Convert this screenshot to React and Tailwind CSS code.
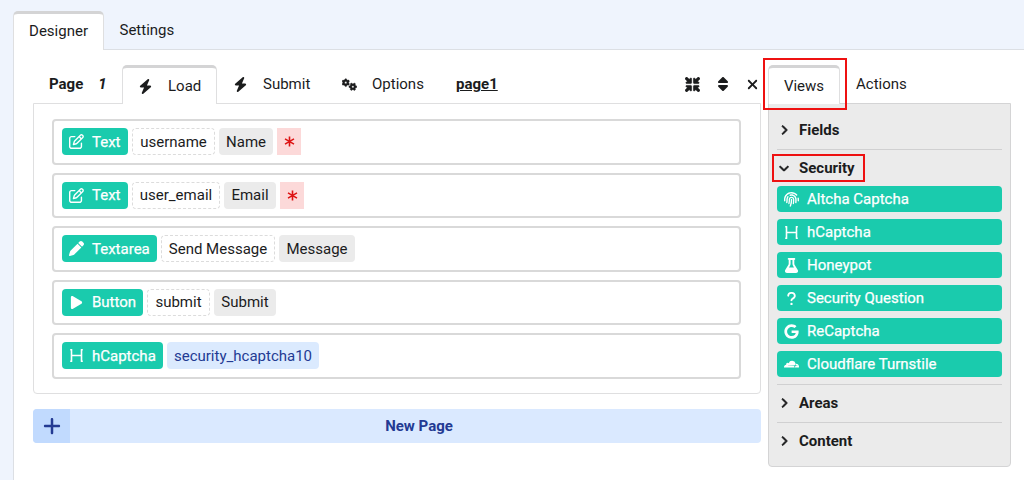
import {
  FaBolt,
  FaChevronDown,
  FaChevronRight,
  FaCloudflare,
  FaFingerprint,
  FaFlask,
  FaGears,
  FaGoogle,
  FaMinimize,
  FaPen,
  FaPlay,
  FaPlus,
  FaQuestion,
  FaRegPenToSquare,
  FaSort,
  FaXmark,
} from 'react-icons/fa6';

const HIcon = ({ size = 14, className = '' }) => (
  <svg width={size} height={size} viewBox="0 0 15 15" fill="none" stroke="currentColor" strokeWidth="1.8" className={className}>
    <path d="M2.5 1.5v12M12.5 1.5v12M2.5 7.5h10M1.2 1.8h2M11.8 1.8h2M1.2 13.2h2M11.8 13.2h2" strokeWidth="1.6" />
  </svg>
);

const RequiredIcon = () => (
  <svg width="11" height="11" viewBox="0 0 11 11" fill="none" stroke="currentColor" strokeWidth="1.6">
    <path d="M5.5 0.5v10M1 2.9l9 5.2M10 2.9l-9 5.2" />
  </svg>
);

const ROWS = [
  { type: 'Text', icon: FaRegPenToSquare, name: 'username', label: 'Name', required: true, width: 'w-[66px]', nameWidth: 'w-[83px]', labelWidth: 'w-[54px]' },
  { type: 'Text', icon: FaRegPenToSquare, name: 'user_email', label: 'Email', required: true, width: 'w-[66px]', nameWidth: 'w-[88px]', labelWidth: 'w-[52px]' },
  { type: 'Textarea', icon: FaPen, name: 'Send Message', label: 'Message', width: 'w-[95px]', nameWidth: 'w-[114px]', labelWidth: 'w-[76px]' },
  { type: 'Button', icon: FaPlay, name: 'submit', label: 'Submit', width: 'w-[81px]', nameWidth: 'w-[63px]', labelWidth: 'w-[62px]' },
  { type: 'hCaptcha', icon: HIcon, id: 'security_hcaptcha10', width: 'w-[101px]' },
];

const SECURITY_VIEWS = [
  { label: 'Altcha Captcha', icon: FaFingerprint },
  { label: 'hCaptcha', icon: HIcon },
  { label: 'Honeypot', icon: FaFlask },
  { label: 'Security Question', icon: FaQuestion },
  { label: 'ReCaptcha', icon: FaGoogle },
  { label: 'Cloudflare Turnstile', icon: FaCloudflare },
];

const CHIP = 'flex h-[27px] shrink-0 items-center justify-center rounded-[4px] whitespace-nowrap';

const FieldRow = ({ row }) => {
  const Icon = row.icon;
  return (
    <div className="flex h-[45.5px] items-center gap-1 rounded-[4px] border-2 border-[#d9d9d9] pl-[8px]">
      <div className={`${CHIP} ${row.width} justify-start! bg-[#1acbad] pl-[7px] text-white [-webkit-text-stroke:0.25px_white]`}>
        <Icon size={15} className="mr-2 shrink-0" />
        {row.type}
      </div>
      {row.name && (
        <div className={`${CHIP} ${row.nameWidth} border border-dashed border-[#dcdcdc]`}>{row.name}</div>
      )}
      {row.label && <div className={`${CHIP} ${row.labelWidth} bg-[#ebebeb]`}>{row.label}</div>}
      {row.required && (
        <div className="flex h-[27px] w-6 items-center justify-center bg-[#fcd9d9] text-[#dd1414]">
          <RequiredIcon />
        </div>
      )}
      {row.id && <div className={`${CHIP} w-[152px] bg-[#dbeafe] text-[#233a93]`}>{row.id}</div>}
    </div>
  );
};

const AccordionTitle = ({ label, open }) => {
  const Icon = open ? FaChevronDown : FaChevronRight;
  return (
    <div className="flex h-full items-center pl-[2px] font-bold">
      <Icon size={10} strokeWidth={50} stroke="currentColor" className="mr-[10px]" />
      {label}
    </div>
  );
};

const App = () => (
  <div className="h-[480px] w-[1024px] overflow-hidden bg-[#eff4fd] pt-[11px] pl-[13px] font-['Roboto',sans-serif] text-[15px] leading-5 text-[#1b1c1d]">
    <nav className="flex h-[38px]">
      <div className="relative z-10 -mb-px flex w-[91px] justify-center rounded-t-[5px] border border-b-0 border-t-[3px] border-[#dfdfe0] border-t-[#d4d4d5] bg-white pt-[7px]">
        Designer
      </div>
      <div className="pt-[9px] pl-[15.5px]">Settings</div>
    </nav>

    <main className="flex h-[431px] border-t border-l border-[#dcdfe4] bg-white pt-[15px] pl-[19px]">
      <section className="w-[728px]">
        <nav className="flex h-[38px] items-stretch">
          <div className="flex w-[89px] shrink-0 items-center pl-4 font-bold">
            Page <span className="ml-[15px] italic">1</span>
          </div>
          <div className="relative z-10 -mb-px flex w-[95px] shrink-0 items-center rounded-t-[5px] border border-b-0 border-t-[3px] border-[#dfdfe0] border-t-[#d4d4d5] bg-white pl-[15px]">
            <FaBolt size={15} className="mr-[15px]" />
            Load
          </div>
          <div className="flex w-[108px] shrink-0 items-center pl-4">
            <FaBolt size={15} className="mr-[15px]" />
            Submit
          </div>
          <div className="flex w-[114px] shrink-0 items-center pl-[17px]">
            <FaGears size={15} strokeWidth={16} stroke="currentColor" className="mr-[15px]" />
            Options
          </div>
          <div className="flex items-center pl-[17px] font-bold underline">page1</div>
          <div className="mr-px ml-auto flex items-center">
            <FaMinimize size={15} strokeWidth={20} stroke="currentColor" />
            <FaSort size={16} className="ml-[15px]" />
            <FaXmark size={15} className="ml-[14px]" />
          </div>
        </nav>
        <div className="flex h-[291px] flex-col gap-[8px] rounded-b-[4px] border border-[#dfdfe0] pr-[19px] pl-[18px] pt-[15px]">
          {ROWS.map((row, i) => (
            <FieldRow key={i} row={row} />
          ))}
        </div>
        <div className="mt-[15px] flex h-[34px] overflow-hidden rounded-[4px] bg-[#dae9ff] font-bold text-[#233a93]">
          <div className="flex w-[37px] items-center justify-center bg-[#c1dafe]">
            <FaPlus size={20} />
          </div>
          <div className="flex flex-1 items-center justify-center pl-[7px]">New Page</div>
        </div>
      </section>

      <aside className="ml-[7px] w-[243px]">
        <nav className="flex h-[38px]">
          <div className="relative z-10 -mb-px flex w-[72px] justify-center rounded-t-[5px] border border-b-0 border-t-[3px] border-[#dfdfe0] border-t-[#d4d4d5] bg-white pt-[8px]">
            Views
            <div className="pointer-events-none absolute -top-[10px] -left-[6px] h-[52px] w-[84px] border-2 border-[#ee1111]" />
          </div>
          <div className="pt-[9px] pl-4">Actions</div>
        </nav>
        <div className="h-[364px] rounded-b-[4px] border-x-[1.5px] border-t border-b-[1.5px] border-[#d4d4d5] bg-[#ebebeb] px-[8px] pt-[8px]">
          <div className="h-[38px] border-b border-[#d0d0d1] pb-px">
            <AccordionTitle label="Fields" />
          </div>
          <div className="relative h-[36px]">
            <AccordionTitle label="Security" open />
            <div className="pointer-events-none absolute top-[4px] -left-[5px] h-[28px] w-[93px] border-2 border-[#ee1111]" />
          </div>
          <div className="flex flex-col gap-[7px]">
            {SECURITY_VIEWS.map(({ label, icon: Icon }) => (
              <div key={label} className="flex h-[26px] items-center rounded-[4px] bg-[#1acbad] pl-[7px] text-white [-webkit-text-stroke:0.25px_white]">
                <Icon size={15} className="mr-2" />
                {label}
              </div>
            ))}
          </div>
          <div className="mt-[7px] h-[38px] border-t border-[#d0d0d1] pb-px">
            <AccordionTitle label="Areas" />
          </div>
          <div className="h-[37px] border-t border-[#d0d0d1]">
            <AccordionTitle label="Content" />
          </div>
        </div>
      </aside>
    </main>
  </div>
);

export default App;
